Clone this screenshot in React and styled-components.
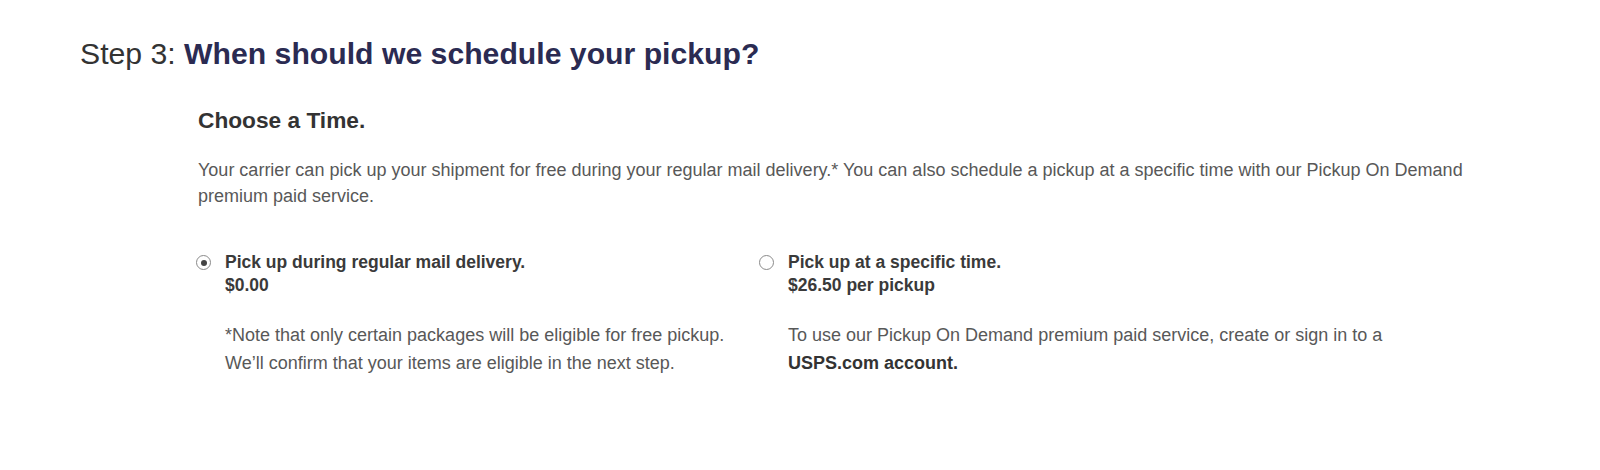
import React, { useState } from 'react';
import styled, { createGlobalStyle } from 'styled-components';

const GlobalStyle = createGlobalStyle`
  html, body {
    margin: 0;
    padding: 0;
    background: #ffffff;
  }
  body {
    font-family: "Liberation Sans", Arial, sans-serif;
  }
`;

const Page = styled.div`
  width: 1600px;
  height: 470px;
  padding: 36px 0 0 80px;
  box-sizing: border-box;
`;

const StepTitle = styled.h1`
  margin: 0;
  font-size: 30.2px;
  font-weight: 400;
  color: #333333;
  line-height: 36px;
`;

const StepQuestion = styled.span`
  font-weight: 700;
  color: #2b2b52;
`;

const Section = styled.div`
  padding: 34px 0 0 118px;
`;

const SectionTitle = styled.h2`
  margin: 0;
  font-size: 22.7px;
  font-weight: 700;
  color: #333333;
  line-height: 28px;
`;

const Intro = styled.p`
  margin: 23px 0 0;
  max-width: 1290px;
  font-size: 18px;
  line-height: 26px;
  color: #585858;
`;

const Options = styled.div`
  display: grid;
  grid-template-columns: 563px 1fr;
  margin: 42px 0 0 -3px;
`;

const Option = styled.label`
  display: grid;
  grid-template-columns: 30px 1fr;
  cursor: pointer;
`;

const Radio = styled.span`
  width: 15px;
  height: 15px;
  margin: 4px 0 0 1px;
  border-radius: 50%;
  border: 1px solid #8a8a8a;
  box-sizing: border-box;
  display: flex;
  align-items: center;
  justify-content: center;
  background: #ffffff;

  &::after {
    content: '';
    width: 6px;
    height: 6px;
    border-radius: 50%;
    background: ${(p) => (p.$checked ? '#444444' : 'transparent')};
  }
`;

const OptionBody = styled.div`
  display: flex;
  flex-direction: column;
`;

const OptionLabel = styled.div`
  font-size: 17.5px;
  font-weight: 700;
  color: #3a3a3a;
  line-height: 23px;
`;

const Note = styled.p`
  margin: 24px 0 0;
  font-size: 18px;
  line-height: 28px;
  color: #585858;
`;

const AccountLink = styled.a`
  font-weight: 700;
  color: #333333;
  text-decoration: none;
`;

const options = [
  {
    id: 'regular',
    label: 'Pick up during regular mail delivery.',
    price: '$0.00',
    note: (
      <>
        *Note that only certain packages will be eligible for free pickup.
        <br />
        We’ll confirm that your items are eligible in the next step.
      </>
    ),
  },
  {
    id: 'specific',
    label: 'Pick up at a specific time.',
    price: '$26.50 per pickup',
    note: (
      <>
        To use our Pickup On Demand premium paid service, create or sign in to a
        <br />
        <AccountLink href="#">USPS.com account.</AccountLink>
      </>
    ),
  },
];

export default function App() {
  const [selected, setSelected] = useState('regular');

  return (
    <Page>
      <GlobalStyle />
      <StepTitle>
        Step 3: <StepQuestion>When should we schedule your pickup?</StepQuestion>
      </StepTitle>
      <Section>
        <SectionTitle>Choose a Time.</SectionTitle>
        <Intro>
          Your carrier can pick up your shipment for free during your regular mail delivery.* You can
          also schedule a pickup at a specific time with our Pickup On Demand premium paid service.
        </Intro>
        <Options>
          {options.map((o) => (
            <Option key={o.id} onClick={() => setSelected(o.id)}>
              <Radio $checked={selected === o.id} />
              <OptionBody>
                <OptionLabel>{o.label}</OptionLabel>
                <OptionLabel>{o.price}</OptionLabel>
                <Note>{o.note}</Note>
              </OptionBody>
            </Option>
          ))}
        </Options>
      </Section>
    </Page>
  );
}
